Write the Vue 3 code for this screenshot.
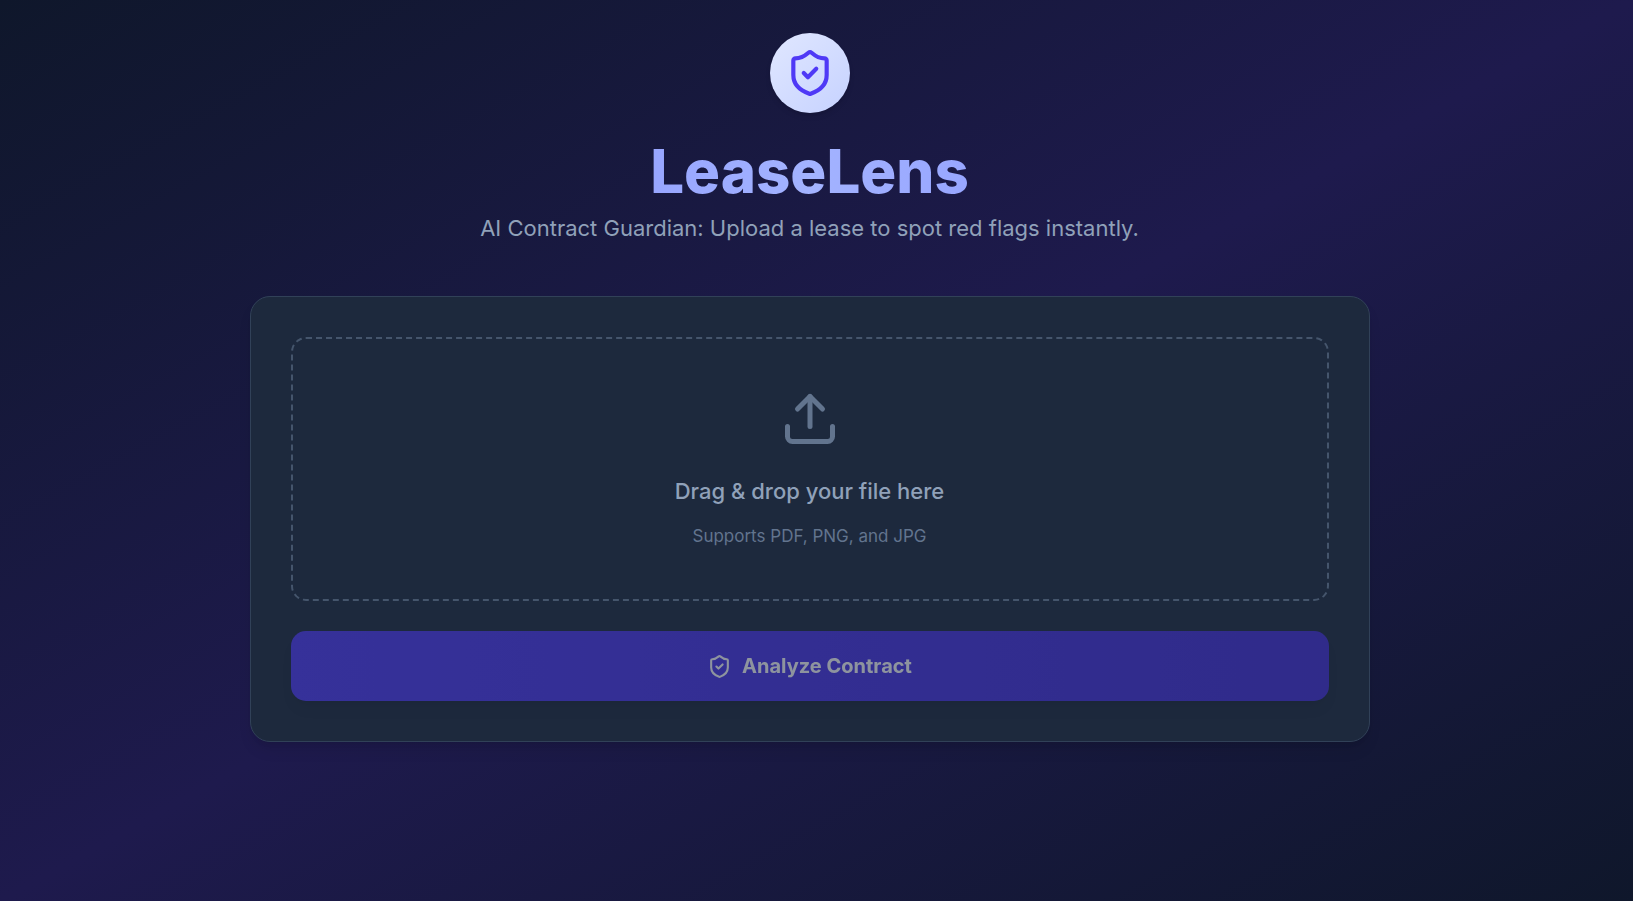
<template>
  <main class="page">
    <header class="hero">
      <div class="logo">
        <svg viewBox="0 0 24 24" aria-hidden="true">
          <path d="M20 13c0 5-3.5 7.5-7.66 8.95a1 1 0 0 1-.67-.01C7.5 20.5 4 18 4 13V6a1 1 0 0 1 1-1c2 0 4.5-1.2 6.24-2.72a1.17 1.17 0 0 1 1.52 0C14.51 3.81 17 5 19 5a1 1 0 0 1 1 1z" />
          <path d="m9 12 2 2 4-4" />
        </svg>
      </div>
      <h1 class="title">LeaseLens</h1>
      <p class="subtitle">AI Contract Guardian: Upload a lease to spot red flags instantly.</p>
    </header>

    <form class="card" @submit.prevent>
      <label class="dropzone" @dragover.prevent @drop.prevent="onDrop">
        <input class="file-input" type="file" accept=".pdf,.png,.jpg,.jpeg" @change="onChange" />
        <svg class="upload-icon" viewBox="0 0 24 24" aria-hidden="true">
          <path d="M12 3v12" />
          <path d="m17 8-5-5-5 5" />
          <path d="M21 15v4a2 2 0 0 1-2 2H5a2 2 0 0 1-2-2v-4" />
        </svg>
        <span class="drop-text">{{ file ? file.name : 'Drag & drop your file here' }}</span>
        <span class="drop-hint">Supports PDF, PNG, and JPG</span>
      </label>

      <button class="analyze" type="submit" :disabled="!file">
        <svg viewBox="0 0 24 24" aria-hidden="true">
          <path d="M20 13c0 5-3.5 7.5-7.66 8.95a1 1 0 0 1-.67-.01C7.5 20.5 4 18 4 13V6a1 1 0 0 1 1-1c2 0 4.5-1.2 6.24-2.72a1.17 1.17 0 0 1 1.52 0C14.51 3.81 17 5 19 5a1 1 0 0 1 1 1z" />
          <path d="m9 12 2 2 4-4" />
        </svg>
        Analyze Contract
      </button>
    </form>
  </main>
</template>

<script setup>
import { ref } from 'vue'

const file = ref(null)

function onChange(e) {
  file.value = e.target.files[0] || null
}

function onDrop(e) {
  file.value = e.dataTransfer.files[0] || null
}
</script>

<style>
body {
  margin: 0;
  background: #0f172b;
}
</style>

<style scoped>
.page {
  box-sizing: border-box;
  min-height: 100vh;
  padding: 33px 54px 33px 40px;
  display: flex;
  flex-direction: column;
  align-items: center;
  background: linear-gradient(to bottom right, #0f172b, #1e1a4d, #0f172b);
  font-family: Inter, "Liberation Sans", sans-serif;
}
svg {
  fill: none;
  stroke: currentColor;
  stroke-width: 2;
  stroke-linecap: round;
  stroke-linejoin: round;
}
.hero {
  width: 100%;
  max-width: 1120px;
  margin-bottom: 50px;
  display: flex;
  flex-direction: column;
  align-items: center;
  text-align: center;
}
.logo {
  display: flex;
  padding: 15px;
  margin-bottom: 28px;
  border-radius: 50%;
  color: #4f39f6;
  background: linear-gradient(to bottom right, #e0e7ff, #c6d2ff);
  box-shadow: 0 4px 6px -1px #0000001a, 0 2px 4px -2px #0000001a;
}
.logo svg {
  width: 50px;
  height: 50px;
}
.title {
  width: 100%;
  margin: 0 0 10px;
  font-size: 60px;
  line-height: 60px;
  font-weight: 800;
  color: transparent;
  background: linear-gradient(to right, #7c86ff, #a3b3ff, #7c86ff);
  -webkit-background-clip: text;
  background-clip: text;
}
.subtitle {
  margin: 0;
  font-size: 22px;
  line-height: 35px;
  color: #90a1b9;
}
.card {
  box-sizing: border-box;
  width: 100%;
  max-width: 1120px;
  padding: 40px;
  display: flex;
  flex-direction: column;
  gap: 30px;
  border: 1px solid #314158;
  border-radius: 20px;
  background: #1d293d;
  box-shadow: 0 10px 15px -3px #0000001a, 0 4px 6px -4px #0000001a;
}
.dropzone {
  padding: 50px;
  display: flex;
  flex-direction: column;
  align-items: center;
  border: 2px dashed #45556c;
  border-radius: 15px;
  cursor: pointer;
}
.file-input {
  position: absolute;
  width: 1px;
  height: 1px;
  opacity: 0;
}
.upload-icon {
  width: 60px;
  height: 60px;
  margin-bottom: 25px;
  color: #62748e;
}
.drop-text {
  margin-bottom: 15px;
  font-size: 22px;
  line-height: 35px;
  font-weight: 500;
  color: #90a1b9;
}
.drop-hint {
  font-size: 17px;
  line-height: 25px;
  color: #62748e;
}
.analyze {
  padding: 20px;
  display: flex;
  align-items: center;
  justify-content: center;
  gap: 10px;
  border: none;
  border-radius: 15px;
  font-family: inherit;
  font-size: 20px;
  line-height: 30px;
  font-weight: 700;
  color: #fff;
  background: linear-gradient(to right, #4f39f6, #432dd7);
  box-shadow: 0 10px 15px -3px #0000001a, 0 4px 6px -4px #0000001a;
  cursor: pointer;
}
.analyze:disabled {
  opacity: 0.5;
  cursor: not-allowed;
}
.analyze svg {
  width: 25px;
  height: 25px;
}
</style>
